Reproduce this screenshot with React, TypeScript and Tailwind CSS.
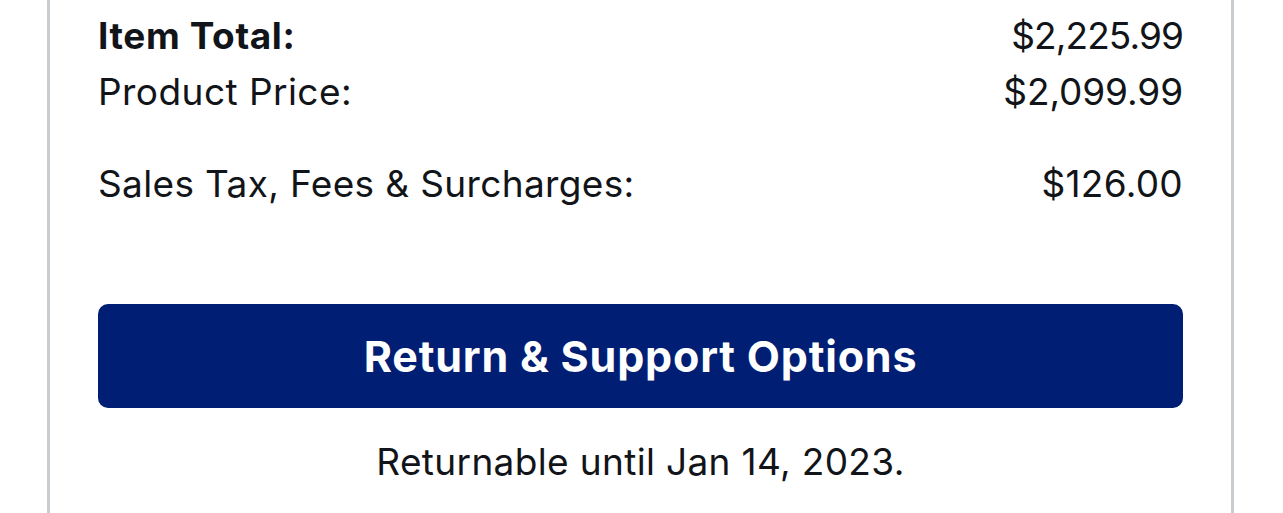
import React from "react";

export default function App() {
  const font = { fontFamily: "Inter, 'Noto Sans', sans-serif" };
  return (
    <div className="w-[1283px] h-[513px] overflow-hidden bg-white" style={font}>
      <div className="ml-[47px] w-[1187px] h-[513px] border-x-[3px] border-[#c8cdd2] px-[48px] pt-[8px] text-[#111418]">
        <div className="flex justify-between text-[37px] leading-[56px]">
          <span className="font-bold tracking-[0.6px]">Item Total:</span>
          <span className="tracking-[-0.9px]">$2,225.99</span>
        </div>
        <div className="flex justify-between text-[37px] leading-[56px]">
          <span className="tracking-[0.45px]">Product Price:</span>
          <span className="tracking-[-0.1px]">$2,099.99</span>
        </div>
        <div className="mt-[36px] flex justify-between text-[37px] leading-[56px]">
          <span className="tracking-[0.35px]">Sales Tax, Fees &amp; Surcharges:</span>
          <span className="tracking-[0.3px]">$126.00</span>
        </div>
        <button className="mt-[92px] flex h-[104px] w-full items-center justify-center rounded-[10px] bg-[#001e73] text-[43px] font-bold tracking-[0.8px] text-white">
          Return &amp; Support Options
        </button>
        <div className="mt-[26px] text-center text-[37px] leading-[56px] tracking-[0.35px]">
          Returnable until Jan 14, 2023.
        </div>
      </div>
    </div>
  );
}
